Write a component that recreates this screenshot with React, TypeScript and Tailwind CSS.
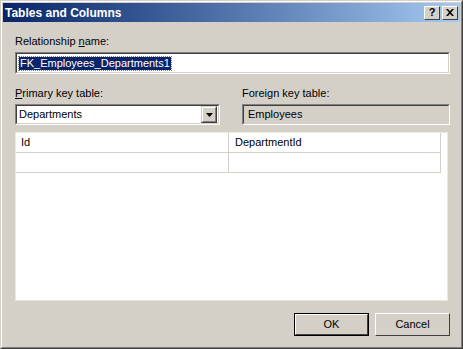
const sunken = 'border-t-[#808080] border-l-[#808080] border-b-white border-r-white border';
const sunkenInner = 'border-t-[#404040] border-l-[#404040] border-b-[#d4d0c8] border-r-[#d4d0c8] border';

const Sunken = ({ className, innerClass, children }: { className: string; innerClass: string; children?: any }) => (
  <div className={`${sunken} ${className}`}>
    <div className={`${sunkenInner} h-full w-full ${innerClass}`}>{children}</div>
  </div>
);

const TitleButton = ({ children }: { children: any }) => (
  <div className="w-[16px] h-[14px] bg-[#d4d0c8] border border-t-white border-l-white border-b-[#404040] border-r-[#404040] flex items-center justify-center">
    {children}
  </div>
);

const PushButton = ({ label, isDefault }: { label: string; isDefault?: boolean }) => (
  <div className={`w-[75px] h-[23px] ${isDefault ? 'border border-black' : ''}`}>
    <div className="h-full w-full bg-[#d4d0c8] border border-t-white border-l-white border-b-[#404040] border-r-[#404040] flex items-center justify-center">
      {label}
    </div>
  </div>
);

export default function App() {
  return (
    <div
      className="w-[463px] h-[349px] bg-[#d4d0c8] border border-t-[#d4d0c8] border-l-[#d4d0c8] border-b-[#404040] border-r-[#404040] text-[11px] text-black overflow-hidden"
      style={{ fontFamily: 'Tahoma, "Liberation Sans", Arial, sans-serif' }}
    >
      <div className="h-full w-full border border-t-white border-l-white border-b-[#808080] border-r-[#808080] flex flex-col p-[1px]">
        {/* title bar */}
        <div className="h-[19px] bg-gradient-to-r from-[#0a246a] to-[#a6caf0] flex items-center pl-[2px] pr-[2px]">
          <span className="text-white font-bold text-[12px] flex-1">Tables and Columns</span>
          <div className="flex">
            <TitleButton>
              <span className="font-bold text-[11px] leading-none">?</span>
            </TitleButton>
            <div className="w-[2px]" />
            <TitleButton>
              <svg width="8" height="7" viewBox="0 0 8 7">
                <path d="M0 0h2l2 2.2L6 0h2L5 3.5 8 7H6L4 4.8 2 7H0l3-3.5z" fill="black" />
              </svg>
            </TitleButton>
          </div>
        </div>

        <div className="flex-1 flex flex-col pl-[12px] pr-[9px]">
          <div className="mt-[13px] h-[13px] leading-[13px]">
            Relationship <span className="underline">n</span>ame:
          </div>
          <Sunken className="mt-[4px] h-[22px] w-[435px]" innerClass="bg-white flex items-center pl-[2px]">
            <span className="bg-[#0a246a] text-white px-[1px] outline outline-1 outline-dotted outline-[#808080] leading-[13px]">
              FK_Employees_Departments1
            </span>
          </Sunken>

          <div className="flex mt-[13px]">
            <div className="w-[205px]">
              <div className="h-[13px] leading-[13px]">
                <span className="underline">P</span>rimary key table:
              </div>
              <Sunken className="mt-[4px] h-[21px] w-[205px]" innerClass="bg-white flex items-center pl-[2px] pr-[1px]">
                <span className="flex-1">Departments</span>
                <div className="w-[16px] h-[17px] bg-[#d4d0c8] border border-t-[#d4d0c8] border-l-[#d4d0c8] border-b-[#404040] border-r-[#404040]">
                  <div className="h-full w-full border border-t-white border-l-white border-b-[#808080] border-r-[#808080] flex items-center justify-center">
                    <svg width="7" height="4" viewBox="0 0 7 4">
                      <path d="M0 0h7L3.5 4z" fill="black" />
                    </svg>
                  </div>
                </div>
              </Sunken>
            </div>
            <div className="ml-[22px] w-[208px]">
              <div className="h-[13px] leading-[13px]">Foreign key table:</div>
              <Sunken className="mt-[4px] h-[21px] w-[208px]" innerClass="bg-[#d4d0c8] flex items-center pl-[4px]">
                Employees
              </Sunken>
            </div>
          </div>

          <div className="mt-[7px] h-[169px] w-[433px] bg-white border border-[#ece9d8]">
            <div className="w-[425px]">
              <div className="flex h-[20px] border-b border-[#d4d0c8]">
                <div className="w-[213px] border-r border-[#d4d0c8] pl-[5px] flex items-center">Id</div>
                <div className="flex-1 pl-[6px] flex items-center border-r border-[#d4d0c8]">DepartmentId</div>
              </div>
              <div className="flex h-[20px] border-b border-[#d4d0c8]">
                <div className="w-[213px] border-r border-[#d4d0c8]" />
                <div className="flex-1 border-r border-[#d4d0c8]" />
              </div>
            </div>
          </div>

          <div className="flex justify-end gap-[6px] mt-[12px] pr-[1px]">
            <PushButton label="OK" isDefault />
            <PushButton label="Cancel" />
          </div>
        </div>
      </div>
    </div>
  );
}
